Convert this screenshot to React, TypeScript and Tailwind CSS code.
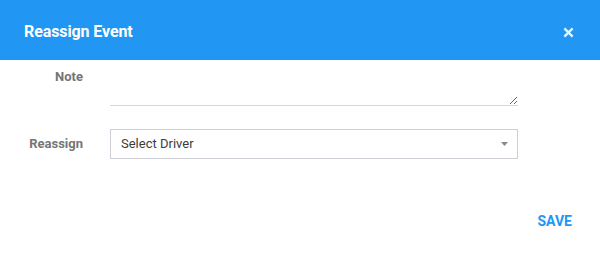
import { useState } from "react";

export default function App() {
  const [note, setNote] = useState("");
  const [driver, setDriver] = useState("");

  return (
    <div className="w-[600px] h-[253px] bg-white font-['Roboto',sans-serif] flex flex-col">
      {/* Header */}
      <div className="h-[60px] shrink-0 bg-[#2196f3] flex items-center justify-between pl-6 pr-[26px] pt-[4px]">
        <h1 className="text-white text-[16px] font-bold tracking-[-0.1px]">Reassign Event</h1>
        <button className="text-white/90 w-[12px] h-[12px] flex items-center justify-center">
          <svg viewBox="0 0 12 12" className="w-[11px] h-[11px]">
            <path d="M1.5 1.5 L10.5 10.5 M10.5 1.5 L1.5 10.5" stroke="currentColor" strokeWidth={2.6} strokeLinecap="butt" />
          </svg>
        </button>
      </div>

      {/* Body */}
      <div className="grid grid-cols-[83px_408px] gap-x-[27px] pt-1">
        <label className="text-[13px] font-bold text-[#757575] text-right pt-[3px]">Note</label>
        <textarea
          value={note}
          onChange={(e) => setNote(e.target.value)}
          className="h-[42px] border-b border-[#d6d6de] text-[13px] text-[#424242] px-0 py-1 outline-none"
        />

        <label className="text-[13px] font-bold text-[#757575] text-right self-center mt-[23px]">Reassign</label>
        <div className="mt-[23px] h-[30px] border border-[#cfcfd8] flex items-center justify-between pl-[10px] pr-[9px] relative">
          <select
            value={driver}
            onChange={(e) => setDriver(e.target.value)}
            className="appearance-none absolute inset-0 opacity-0 cursor-pointer"
          >
            <option value="">Select Driver</option>
          </select>
          <span className="text-[13px] text-[#3c3c3c]">Select Driver</span>
          <svg viewBox="0 0 7 4" className="w-[7px] h-[4px] text-[#8a8a8a]">
            <path d="M0 0 L7 0 L3.5 4 Z" fill="currentColor" />
          </svg>
        </div>
      </div>

      {/* Footer */}
      <div className="flex justify-end pr-7 pt-[52px]">
        <button className="text-[#2196f3] text-[14px] font-bold">SAVE</button>
      </div>
    </div>
  );
}
